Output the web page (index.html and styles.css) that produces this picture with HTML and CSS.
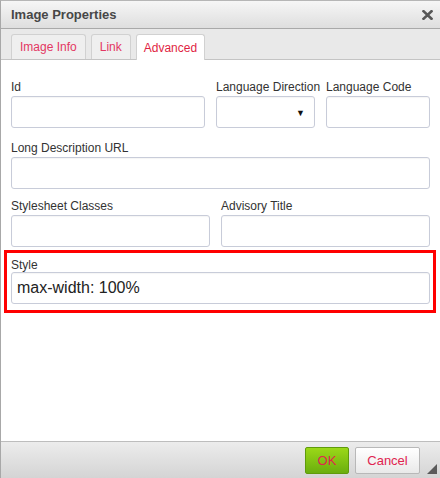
FILE: index.html
```html
<!DOCTYPE html>
<html>
<head>
<meta charset="utf-8">
<link rel="stylesheet" href="styles.css">
</head>
<body>
<div class="dialog">
  <div class="titlebar">
    <span class="title">Image Properties</span>
    <svg class="close" width="11" height="10" viewBox="0 0 11 10"><path d="M1.5 1.2 L9.5 8.8 M9.5 1.2 L1.5 8.8" stroke="#575757" stroke-width="2.6" stroke-linecap="square"/></svg>
  </div>
  <div class="tabs">
    <div class="tab">Image Info</div>
    <div class="tab">Link</div>
    <div class="tab active">Advanced</div>
  </div>
  <div class="content">
    <div class="row row1">
      <div class="field f-id"><label>Id</label><div class="input"></div></div>
      <div class="field f-dir"><label>Language Direction</label><div class="input select"><span class="arrow">&#9660;</span></div></div>
      <div class="field f-code"><label>Language Code</label><div class="input"></div></div>
    </div>
    <div class="row row2">
      <div class="field f-full"><label>Long Description URL</label><div class="input"></div></div>
    </div>
    <div class="row row3">
      <div class="field f-half"><label>Stylesheet Classes</label><div class="input"></div></div>
      <div class="field f-half"><label>Advisory Title</label><div class="input"></div></div>
    </div>
    <div class="highlight">
      <div class="field f-full"><label class="tight">Style</label><div class="input value">max-width: 100%</div></div>
    </div>
  </div>
  <div class="footer">
    <div class="btn ok">OK</div>
    <div class="btn cancel">Cancel</div>
    <div class="grip"></div>
  </div>
</div>
</body>
</html>
```
FILE: styles.css
```css
html, body {
  margin: 0;
  padding: 0;
  background: #fff;
}
body {
  font-family: "Liberation Sans", Arial, sans-serif;
  width: 440px;
  height: 478px;
  overflow: hidden;
}
.dialog {
  box-sizing: border-box;
  width: 440px;
  height: 478px;
  border-left: 1px solid #a8a8a8;
  border-top: 1px solid #b6b6b6;
  display: flex;
  flex-direction: column;
}
.titlebar {
  height: 27px;
  border-bottom: 1px solid #a9a9a9;
  background: linear-gradient(#f6f6f6, #dedede);
  display: flex;
  align-items: center;
  justify-content: space-between;
  padding: 0 7px 0 10px;
}
.title {
  font-weight: bold;
  font-size: 13px;
  color: #474747;
}
.close {
  display: block;
  margin-top: 1px;
}
.tabs {
  height: 25px;
  padding-top: 5px;
  padding-left: 10px;
  background: #e9e9e9;
  border-bottom: 1px solid #c4c4c4;
  display: flex;
  gap: 5px;
  align-items: flex-end;
}
.tab {
  box-sizing: border-box;
  height: 25px;
  padding: 0 8px;
  border: 1px solid #d1d1d1;
  border-bottom: none;
  border-radius: 3px 3px 0 0;
  background: #efefef;
  color: #e33763;
  font-size: 12px;
  line-height: 25px;
}
.tab.active {
  background: #fff;
  height: 26px;
  margin-bottom: -1px;
  padding: 0 7px;
  color: #df1f44;
  line-height: 26px;
}
.content {
  flex: 1;
  padding: 20px 10px 0 10px;
  background: #fff;
}
.row {
  display: flex;
  gap: 11px;
}
.row2 { margin-top: 13px; }
.row3 { margin-top: 10px; }
.field {
  display: flex;
  flex-direction: column;
}
label {
  font-size: 12px;
  line-height: 14px;
  color: #333;
  margin-bottom: 2px;
  white-space: nowrap;
}
label.tight { margin-bottom: 0; }
.input {
  box-sizing: border-box;
  height: 32px;
  border: 1px solid #c8ccd9;
  border-radius: 3px;
  background: #fff;
  box-shadow: inset 0 1px 1px rgba(0,0,0,0.04);
}
.f-id { width: 194px; }
.f-dir { width: 99px; }
.f-code { width: 104px; }
.f-full { width: 100%; }
.f-half { width: 199px; }
.row3 .f-half:last-child { width: 209px; }
.select {
  display: flex;
  align-items: center;
  justify-content: flex-end;
  padding-right: 9px;
}
.arrow {
  font-size: 9px;
  color: #111;
  margin-top: 2px;
}
.highlight {
  margin: 3px -6px 0 -7px;
  border: 3px solid #ff0000;
  padding: 5px 3px 6px 4px;
}
.value {
  font-size: 16px;
  line-height: 30px;
  padding-left: 5px;
  color: #222;
}
.footer {
  height: 36px;
  border-top: 1px solid #bdbdbd;
  background: linear-gradient(#ececec, #d4d4d4);
  display: flex;
  align-items: flex-start;
  justify-content: flex-end;
  padding-right: 20px;
  gap: 6px;
  position: relative;
}
.btn {
  box-sizing: border-box;
  height: 27px;
  margin-top: 5px;
  border-radius: 2px;
  font-size: 13px;
  line-height: 25px;
  text-align: center;
  color: #e0244f;
}
.ok {
  width: 44px;
  background: linear-gradient(#9bd818, #6aae0e);
  border: 1px solid #5f9b0b;
}
.cancel {
  width: 65px;
  background: linear-gradient(#ffffff, #e9e9e9);
  border: 1px solid #b8b8b8;
}
.grip {
  position: absolute;
  right: 3px;
  bottom: 4px;
  width: 0;
  height: 0;
  border-left: 10px solid transparent;
  border-bottom: 10px solid #5a5a5a;
}
```
